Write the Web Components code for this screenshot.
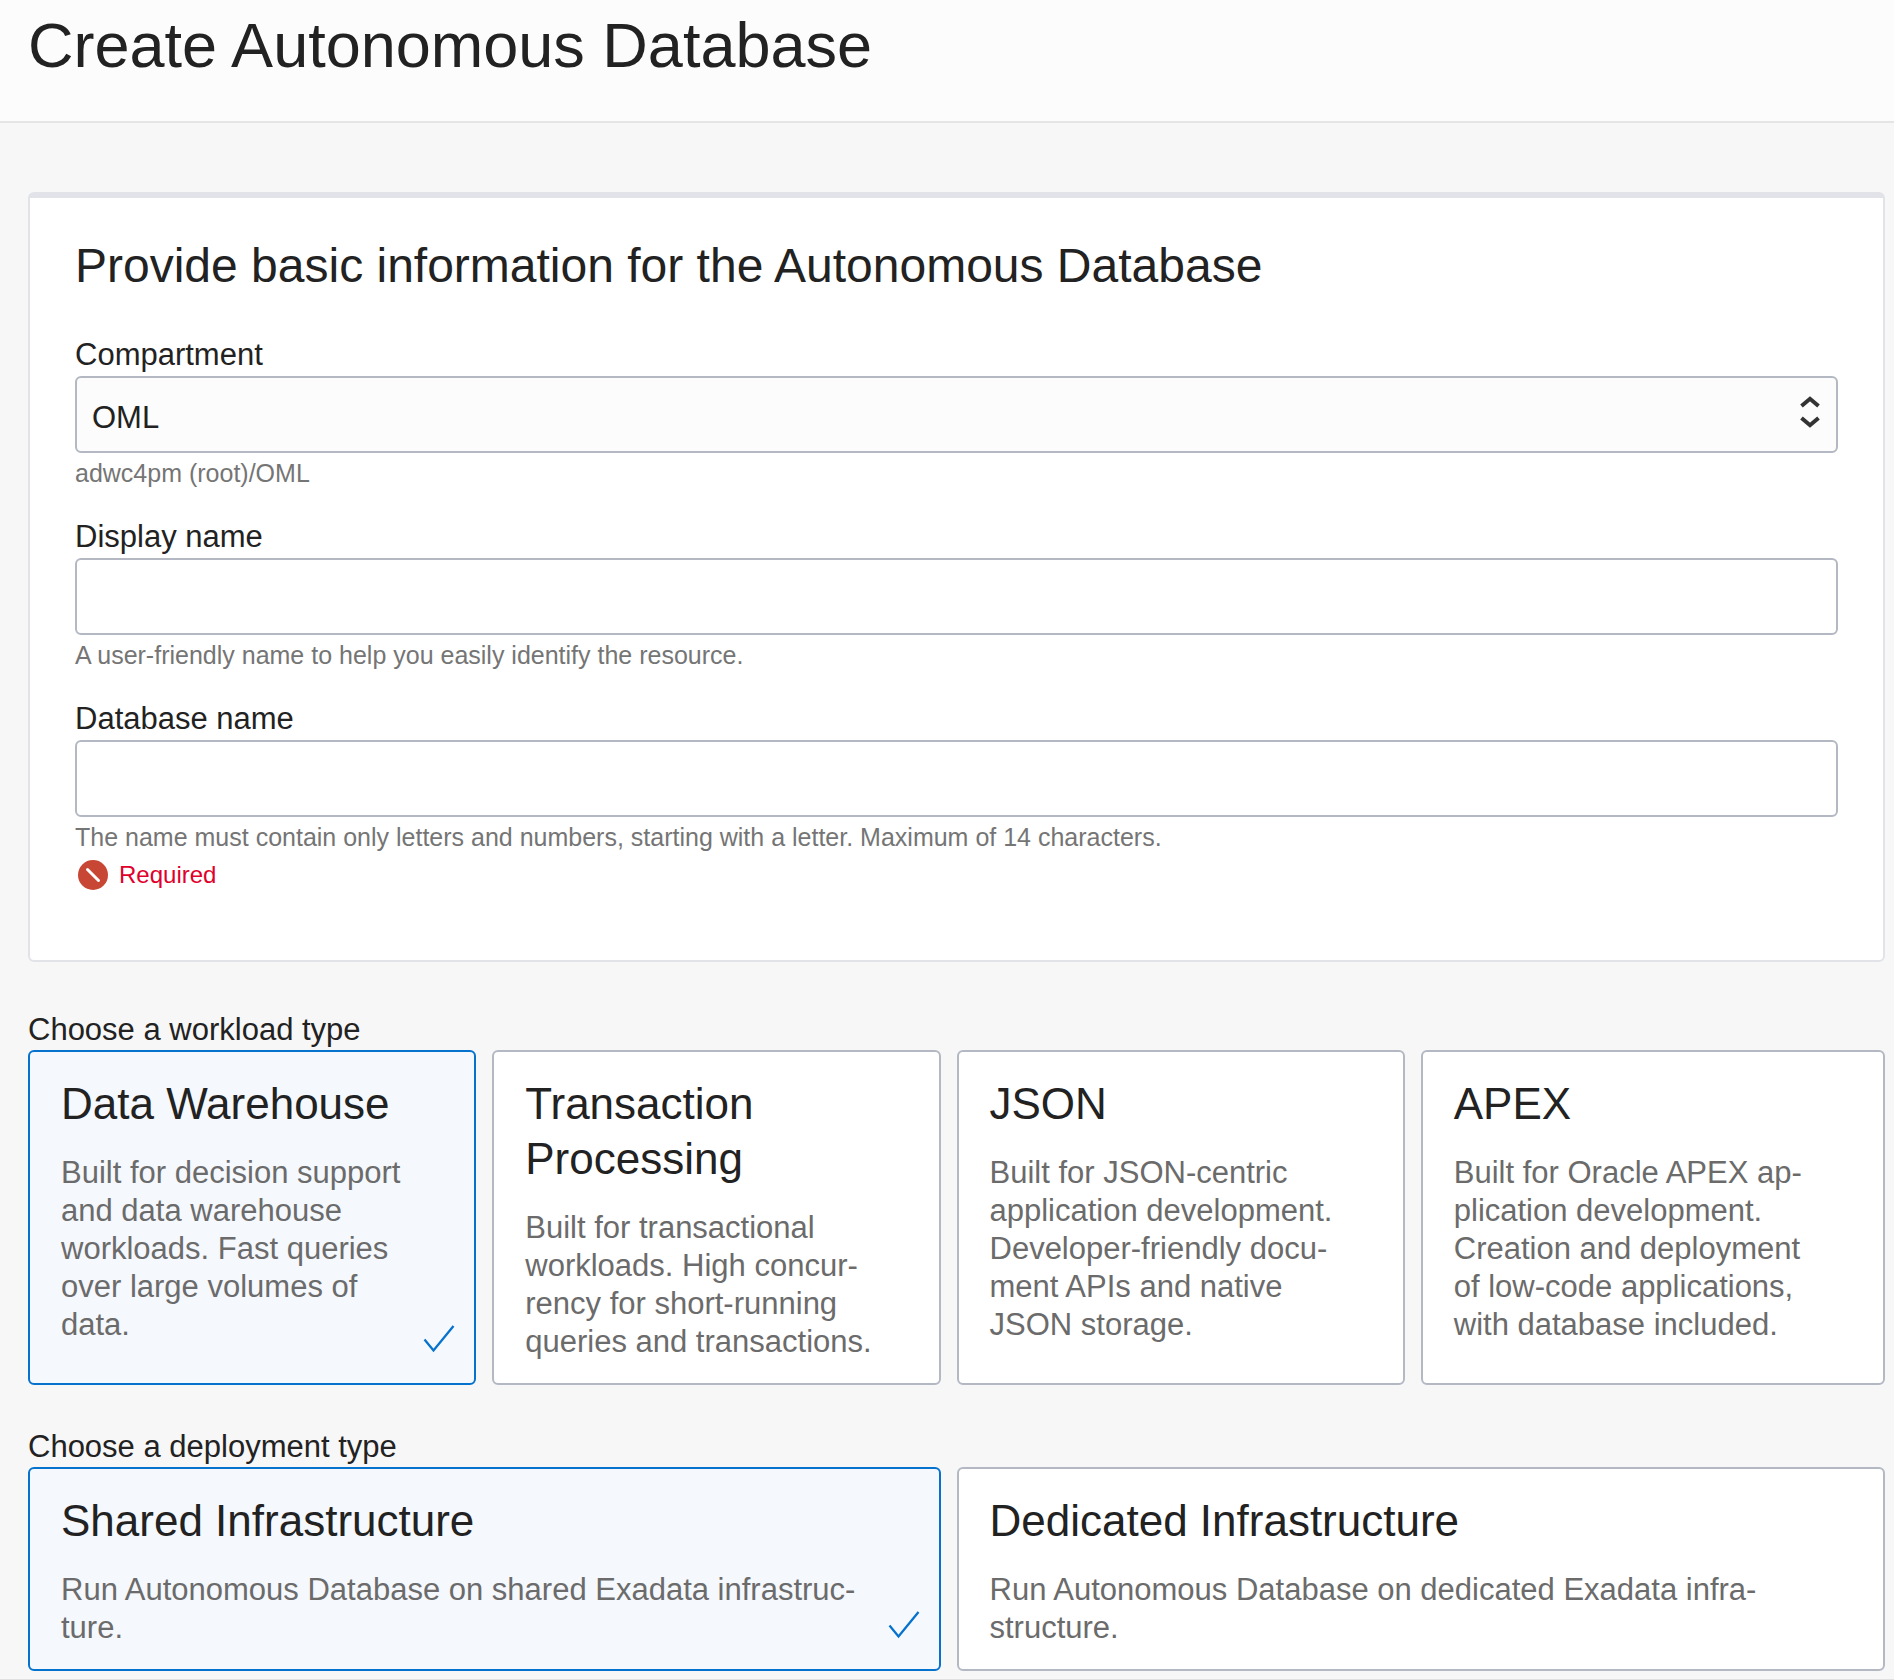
<!DOCTYPE html>
<html lang="en">
<head>
<meta charset="utf-8">
<meta name="viewport" content="width=device-width, initial-scale=1">
<title>Create Autonomous Database</title>
<style>
  html { background: #f7f7f7; }
  body { margin: 0; font-family: "Liberation Sans", Arial, sans-serif; font-size: 31px; line-height: 38px; color: #222; }
</style>
</head>
<body>
<adb-page>
  <span slot="title">Create Autonomous Database</span>
  <form-panel heading="Provide basic information for the Autonomous Database">
    <select-field label="Compartment" value="OML" help="adwc4pm (root)/OML"></select-field>
    <text-field label="Display name" help="A user-friendly name to help you easily identify the resource."></text-field>
    <text-field label="Database name" help="The name must contain only letters and numbers, starting with a letter. Maximum of 14 characters." error="Required"></text-field>
  </form-panel>
  <choice-group label="Choose a workload type">
    <choice-card name="workload" heading="Data Warehouse" checked>Built for decision support and data warehouse workloads. Fast queries over large volumes of data.</choice-card>
    <choice-card name="workload" heading="Transaction Processing">Built for transactional workloads. High concur&shy;rency for short-running queries and transactions.</choice-card>
    <choice-card name="workload" heading="JSON">Built for JSON-centric application development. Developer-friendly docu&shy;ment APIs and native JSON storage.</choice-card>
    <choice-card name="workload" heading="APEX">Built for Oracle APEX ap&shy;plication development. Creation and deployment of low-code applications, with database included.</choice-card>
  </choice-group>
  <choice-group label="Choose a deployment type">
    <choice-card name="deployment" heading="Shared Infrastructure" checked>Run Autonomous Database on shared Exadata infrastruc&shy;ture.</choice-card>
    <choice-card name="deployment" heading="Dedicated Infrastructure">Run Autonomous Database on dedicated Exadata infra&shy;structure.</choice-card>
  </choice-group>
</adb-page>

<script>
class BaseElement extends HTMLElement {
  connectedCallback() {
    if (this.shadowRoot) return;
    this.attachShadow({ mode: 'open' }).innerHTML =
      `<style>*{box-sizing:border-box}:host{display:block;box-sizing:border-box}</style>` + this.render();
  }
  attr(name) { return this.getAttribute(name) || ''; }
}

customElements.define('adb-page', class extends BaseElement {
  render() {
    return `<style>
      header { padding: 8px 28px 39px; background: #fcfcfc; border-bottom: 2px solid #e5e5e5; }
      h1 { margin: 0; font-size: 63px; line-height: 74px; font-weight: 400; }
      main { display: flex; flex-direction: column; gap: 42px; padding: 69px 9px 8px 28px; }
      footer { border-top: 1px solid #e0e0e0; }
    </style>
    <header><h1><slot name="title"></slot></h1></header>
    <main><slot></slot></main>
    <footer></footer>`;
  }
});

customElements.define('form-panel', class extends BaseElement {
  render() {
    return `<style>
      :host { padding: 38px 45px 65px; margin-bottom: 6px; background: #fff; border: 2px solid #e1e3e8; border-top-width: 6px; border-radius: 6px; }
      h2 { margin: 0 0 38px; font-size: 48px; line-height: 60px; font-weight: 400; }
      .fields { display: flex; flex-direction: column; gap: 28px; }
    </style>
    <h2>${this.attr('heading')}</h2>
    <div class="fields"><slot></slot></div>`;
  }
});

const fieldStyle = `
  label { display: block; line-height: 42px; }
  .control { display: block; width: 100%; height: 77px; margin: 0; font: inherit; color: inherit;
    border: 2px solid #b3b8c3; border-radius: 6px; background: #fff; padding: 6px 16px 0; outline: 0; }
  .help { margin: 5px 0 0; font-size: 25px; line-height: 30px; color: #757575; }
  .error { display: flex; align-items: center; gap: 11px; margin: 3px 0 0 3px; height: 40px; font-size: 24px; line-height: 30px; color: #e0002b; }
  .error svg { display: block; width: 30px; height: 30px; }`;

customElements.define('select-field', class extends BaseElement {
  render() {
    return `<style>${fieldStyle}
      .box { display: grid; align-items: center; }
      .box > * { grid-area: 1 / 1; }
      select.control { appearance: none; background: #fcfcfc; padding-left: 15px; }
      .box svg { justify-self: end; margin: 0 18px 6px 0; width: 20px; height: 34px; pointer-events: none; }
    </style>
    <label for="control">${this.attr('label')}</label>
    <div class="box">
      <select class="control" id="control" aria-describedby="help"><option>${this.attr('value')}</option></select>
      <svg viewBox="0 0 20 34" fill="none" stroke="#333" stroke-width="4" aria-hidden="true"><path d="M1.500 11 10 3.800 18.500 11M1.500 23 10 30.200 18.500 23"/></svg>
    </div>
    <p class="help" id="help">${this.attr('help')}</p>`;
  }
});

customElements.define('text-field', class extends BaseElement {
  render() {
    const error = this.attr('error');
    return `<style>${fieldStyle}</style>
    <label for="control">${this.attr('label')}</label>
    <input class="control" id="control" type="text" aria-describedby="help">
    <p class="help" id="help">${this.attr('help')}</p>
    ${error ? `<div class="error">
      <svg viewBox="0 0 30 30" aria-hidden="true"><circle cx="15" cy="15" r="15" fill="#c74634"/><path d="M9.500 9.500 20.500 20.500" stroke="#fff" stroke-width="3" stroke-linecap="round"/></svg>
      <span>${error}</span></div>` : ''}`;
  }
});

customElements.define('choice-group', class extends BaseElement {
  render() {
    return `<style>
      fieldset { border: 0; margin: 0; padding: 0; min-width: 0; }
      legend { padding: 0; line-height: 40px; }
      .cards { display: grid; grid-auto-flow: column; grid-auto-columns: minmax(0, 1fr); }
      ::slotted(choice-card) { padding-right: 16px; }
      ::slotted(choice-card:last-child) { padding-right: 0; }
    </style>
    <fieldset><legend>${this.attr('label')}</legend><div class="cards"><slot></slot></div></fieldset>`;
  }
});

customElements.define('choice-card', class extends BaseElement {
  render() {
    return `<style>
      :host { display: flex; }
      label { position: relative; flex: 1; min-width: 0; display: block; padding: 24px 56px 22px 31px;
        background: #fff; border: 2px solid #b3b8c3; border-radius: 6px; cursor: pointer; }
      input { position: absolute; opacity: 0; width: 1px; height: 1px; margin: 0; }
      .title { display: block; margin-bottom: 23px; font-size: 44px; line-height: 55px; }
      .text { display: block; color: #6b6b6b; }
      svg { display: none; position: absolute; right: 19px; bottom: 30px; width: 32px; height: 28px; }
      label:has(input:checked) { background: #f5f8fd; border-color: #0572ce; }
      input:checked ~ svg { display: block; }
    </style>
    <label>
      <input type="radio" name="${this.attr('name')}" ${this.hasAttribute('checked') ? 'checked' : ''}>
      <span class="title">${this.attr('heading')}</span>
      <span class="text"><slot></slot></span>
      <svg viewBox="0 0 32 28" fill="none" stroke="#0572ce" stroke-width="2.300" aria-hidden="true"><path d="M1.500 14.500 10.500 25.500 30.500 1"/></svg>
    </label>`;
  }
});
</script>
</body>
</html>
